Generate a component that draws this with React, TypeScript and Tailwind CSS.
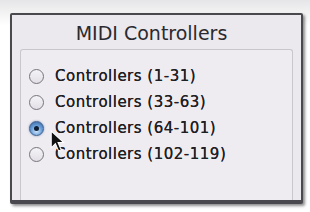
import React from "react";

const rows = [
	{ label: "Controllers (1-31)", checked: false },
	{ label: "Controllers (33-63)", checked: false },
	{ label: "Controllers (64-101)", checked: true },
	{ label: "Controllers (102-119)", checked: false },
];

const Radio: React.FC<{ checked: boolean }> = ({ checked }) =>
	checked ? (
		<span className="flex h-[15px] w-[15px] items-center justify-center rounded-full border border-[#3d5f8c] bg-[radial-gradient(circle_at_50%_70%,#cfe6fb_0%,#6fa3dc_45%,#2f5f9e_100%)] shadow-[0_0_2px_rgba(40,80,140,0.6)]">
			<span className="h-[5px] w-[5px] rounded-full bg-[#0d1d33]" />
		</span>
	) : (
		<span className="h-[15px] w-[15px] rounded-full border-[1.5px] border-[#77757b] bg-[linear-gradient(#f4f3f6,#e2e0e6)]" />
	);

const Cursor: React.FC = () => (
	<svg
		className="absolute left-[50px] top-[130px]"
		width="15"
		height="23"
		viewBox="0 0 14 22"
	>
		<path
			d="M1 1 L1 17 L5 13 L8 20 L10.5 19 L7.5 12 L13 12 Z"
			fill="#111"
			stroke="#fff"
			strokeWidth="1"
		/>
	</svg>
);

export default function App() {
	return (
		<div className="relative h-[212px] w-[310px] overflow-hidden bg-[linear-gradient(#e6e6e8,#ffffff_12%)] pl-[10px] pt-[13px] font-['DejaVu_Sans',sans-serif]">
			<div className="flex h-[191px] w-[293px] flex-col rounded-[2px] border-2 border-b-[4px] border-[#4a494e] bg-[#ebe8ee] shadow-[2px_2px_3px_rgba(0,0,0,0.45)]">
				<div className="flex h-[34px] items-center justify-center pr-[10px] pt-[2px] text-[19px] text-[#2a2a2f]">
					MIDI Controllers
				</div>
				<div className="mx-[8px] flex flex-1 flex-col gap-[6px] rounded-t-[3px] border border-b-0 border-[#c9c7cd] bg-[#eeebf1] pl-[8px] pt-[16px]">
					{rows.map((row) => (
						<div key={row.label} className="flex h-[20px] items-center gap-[11px]">
							<Radio checked={row.checked} />
							<span className="text-[15px] tracking-[0.5px] text-[#1f1f24] [text-shadow:0_0_0.6px_#1f1f24]">
								{row.label}
							</span>
						</div>
					))}
				</div>
			</div>
			<Cursor />
		</div>
	);
}
